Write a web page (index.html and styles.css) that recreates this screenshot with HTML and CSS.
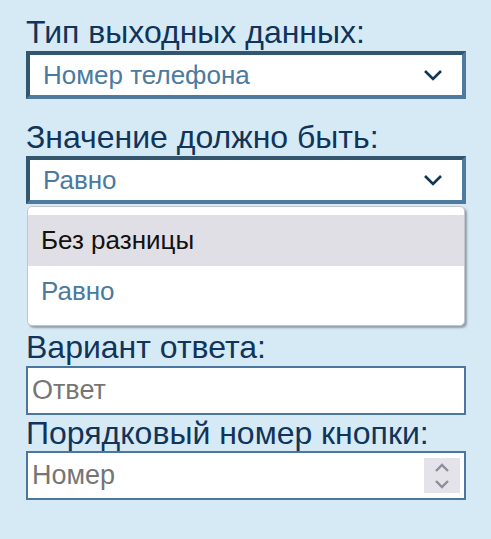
FILE: index.html
```html
<!DOCTYPE html>
<html lang="ru">
<head>
<meta charset="utf-8">
<link rel="stylesheet" href="styles.css">
</head>
<body>
<div class="form">
  <div class="label">Тип выходных данных:</div>
  <div class="select">
    <span class="value">Номер телефона</span>
    <svg class="chev" width="20" height="12" viewBox="0 0 20 12"><path d="M2 2 L10 10 L18 2" fill="none" stroke="#0f3557" stroke-width="2.6"/></svg>
  </div>

  <div class="label">Значение должно быть:</div>
  <div class="select open">
    <span class="value">Равно</span>
    <svg class="chev" width="20" height="12" viewBox="0 0 20 12"><path d="M2 2 L10 10 L18 2" fill="none" stroke="#0f3557" stroke-width="2.6"/></svg>
  </div>
  <div class="listbox">
    <div class="option active">Без разницы</div>
    <div class="option selected">Равно</div>
  </div>

  <div class="label">Вариант ответа:</div>
  <div class="input"><span class="placeholder">Ответ</span></div>

  <div class="label last">Порядковый номер кнопки:</div>
  <div class="input number">
    <span class="placeholder">Номер</span>
    <span class="spinner">
      <svg width="18" height="30" viewBox="0 0 18 30"><path d="M3 10 L9 4 L15 10 M3 20 L9 26 L15 20" fill="none" stroke="#8e8d99" stroke-width="2.4"/></svg>
    </span>
  </div>
</div>
</body>
</html>
```
FILE: styles.css
```css
html, body {
  margin: 0;
  padding: 0;
  background: #d6eaf5;
}
body {
  font-family: "Liberation Sans", Arial, sans-serif;
}
.form {
  padding: 14px 25px 0 26px;
  display: flex;
  flex-direction: column;
}
.label {
  font-size: 32px;
  line-height: 37px;
  color: #10345a;
}
.label.last {
  line-height: 36px;
}
.select {
  height: 48px;
  box-sizing: border-box;
  border-style: solid;
  border-width: 4px;
  border-color: #34556e #4f7a9f #4f7a9f #34556e;
  background: #fff;
  display: flex;
  align-items: center;
  justify-content: space-between;
  padding: 0 19px 0 13px;
  margin-bottom: 20px;
}
.select.open {
  margin-bottom: 2px;
}
.value {
  font-size: 26px;
  color: #4b7aa0;
}
.listbox {
  margin: 0 1px 3px 1px;
  border: 1px solid #c3c7cc;
  border-radius: 5px;
  background: #fff;
  box-shadow: 2px 2px 2px rgba(60, 70, 80, 0.45);
  padding: 8px 0 9px;
}
.option {
  height: 51px;
  display: flex;
  align-items: center;
  padding-left: 13px;
  font-size: 26px;
}
.option.active {
  background: #e0dfe5;
  color: #111;
}
.option.selected {
  color: #4b7aa0;
  height: 50px;
}
.input {
  height: 49px;
  box-sizing: border-box;
  border: 2px solid #4a76a0;
  background: #fff;
  display: flex;
  align-items: center;
  justify-content: space-between;
  padding: 0 4px 0 4px;
}
.placeholder {
  font-size: 27px;
  color: #757575;
}
.spinner {
  width: 36px;
  height: 35px;
  background: #e4e3ea;
  display: flex;
  align-items: center;
  justify-content: center;
}
```
